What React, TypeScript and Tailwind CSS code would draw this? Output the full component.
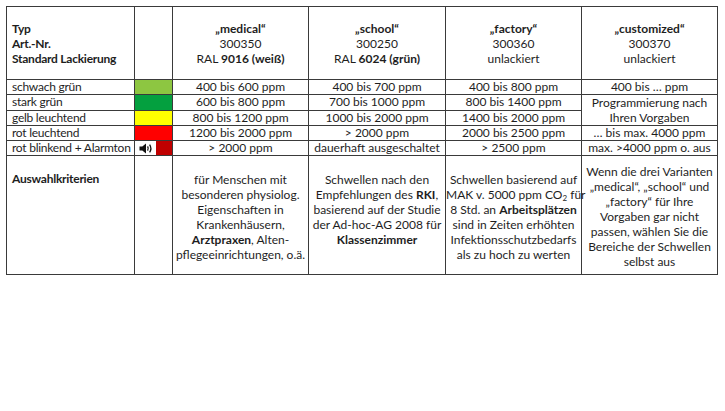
import React from "react";

const cell = "border border-[#3a3a3a] p-0 leading-[14px]";
const label = "tracking-[-0.25px]";

function Speaker() {
    return (
        <svg width="14" height="11" viewBox="0 0 14 11" className="block">
            <path d="M0.5 3.5h2.8L7 0.4v10.2L3.3 7.5H0.5z" fill="#111" />
            <path d="M8.6 3.4q1.3 2.1 0 4.2" stroke="#111" strokeWidth="1.3" fill="none" />
            <path d="M10.6 1.6q2.6 3.9 0 7.8" stroke="#111" strokeWidth="1.3" fill="none" />
        </svg>
    );
}

const rows = [
    { label: "schwach grün", color: "bg-[#8dc641]", values: ["400 bis 600 ppm", "400 bis 700 ppm", "400 bis 800 ppm"] },
    { label: "stark grün", color: "bg-[#04a03f]", values: ["600 bis 800 ppm", "700 bis 1000 ppm", "800 bis 1400 ppm"] },
    { label: "gelb leuchtend", color: "bg-[#ffff00]", values: ["800 bis 1200 ppm", "1000 bis 2000 ppm", "1400 bis 2000 ppm"] },
    { label: "rot leuchtend", color: "bg-[#ff0000]", values: ["1200 bis 2000 ppm", "> 2000 ppm", "2000 bis 2500 ppm"] },
];

export default function App() {
    return (
        <div className="w-[725px] h-[411px] bg-white pt-[6px] pl-[6px] font-['Lato','Open_Sans',sans-serif] text-[12px] text-[#1e1e1e]">
            <table className="border-collapse table-fixed w-[711px]">
                <colgroup>
                    <col className="w-[128px]" />
                    <col className="w-[38px]" />
                    <col className="w-[136px]" />
                    <col className="w-[137px]" />
                    <col className="w-[136px]" />
                    <col className="w-[136px]" />
                </colgroup>
                <tbody>
                    {/* Header */}
                    <tr className="h-[73px]">
                        <td className={`${cell} ${label} pl-[5px] font-bold align-middle`}>
                            <div className="leading-[15px]">Typ<br />Art.-Nr.<br />Standard Lackierung</div>
                        </td>
                        <td className={cell}></td>
                        <td className={`${cell} text-center`}>
                            <div className="leading-[15px]">
                                <b>„medical“</b><br />300350<br />RAL <b>9016 (weiß)</b>
                            </div>
                        </td>
                        <td className={`${cell} text-center`}>
                            <div className="leading-[15px]">
                                <b>„school“</b><br />300250<br />RAL <b>6024 (grün)</b>
                            </div>
                        </td>
                        <td className={`${cell} text-center`}>
                            <div className="leading-[15px]">
                                <b>„factory“</b><br />300360<br />unlackiert
                            </div>
                        </td>
                        <td className={`${cell} text-center`}>
                            <div className="leading-[15px]">
                                <b>„customized“</b><br />300370<br />unlackiert
                            </div>
                        </td>
                    </tr>

                    {/* Colour rows */}
                    {rows.map((r, i) => (
                        <tr key={r.label} className="h-[15px]">
                            <td className={`${cell} ${label} pl-[5px] whitespace-nowrap`}>{r.label}</td>
                            <td className={`${cell} ${r.color}`}></td>
                            {r.values.map((v) => (
                                <td key={v} className={`${cell} text-center whitespace-nowrap`}>{v}</td>
                            ))}
                            {i === 0 && <td className={`${cell} text-center whitespace-nowrap`}>400 bis … ppm</td>}
                            {i === 1 && (
                                <td rowSpan={2} className={`${cell} text-center leading-[15px]`}>
                                    Programmierung nach<br />Ihren Vorgaben
                                </td>
                            )}
                            {i === 3 && <td className={`${cell} text-center whitespace-nowrap`}>… bis max. 4000 ppm</td>}
                        </tr>
                    ))}
                    <tr className="h-[15px]">
                        <td className={`${cell} ${label} pl-[5px] whitespace-nowrap`}>rot blinkend + Alarmton</td>
                        <td className={cell}>
                            <div className="flex h-[14px]">
                                <div className="w-[21px] flex items-center justify-center bg-white">
                                    <Speaker />
                                </div>
                                <div className="flex-1 bg-[#c00000]"></div>
                            </div>
                        </td>
                        <td className={`${cell} text-center whitespace-nowrap`}>&gt; 2000 ppm</td>
                        <td className={`${cell} text-center whitespace-nowrap`}>dauerhaft ausgeschaltet</td>
                        <td className={`${cell} text-center whitespace-nowrap`}>&gt; 2500 ppm</td>
                        <td className={`${cell} text-center whitespace-nowrap`}>max. &gt;4000 ppm o. aus</td>
                    </tr>

                    {/* Criteria */}
                    <tr className="h-[119px]">
                        <td className={`${cell} ${label} align-top pl-[5px] pt-[16px] font-bold`}>Auswahlkriterien</td>
                        <td className={cell}></td>
                        <td className={`${cell} align-top pt-[16px] text-center leading-[15px] whitespace-nowrap`}>
                            für Menschen mit<br />
                            besonderen physiolog.<br />
                            Eigenschaften in<br />
                            Krankenhäusern,<br />
                            <b>Arztpraxen</b>, Alten-<br />
                            pflegeeinrichtungen, o.ä.
                        </td>
                        <td className={`${cell} align-top pt-[16px] text-center leading-[15px] whitespace-nowrap`}>
                            Schwellen nach den<br />
                            Empfehlungen des <b>RKI</b>,<br />
                            basierend auf der Studie<br />
                            der Ad-hoc-AG 2008 für<br />
                            <b>Klassenzimmer</b>
                        </td>
                        <td className={`${cell} align-top pt-[16px] text-center leading-[15px] whitespace-nowrap`}>
                            Schwellen basierend auf<br />
                            MAK v. 5000 ppm CO<sub className="text-[8px] leading-none">2</sub> für<br />
                            8 Std. an <b>Arbeitsplätzen</b><br />
                            sind in Zeiten erhöhten<br />
                            Infektionsschutzbedarfs<br />
                            als zu hoch zu werten
                        </td>
                        <td className={`${cell} align-top pt-[8px] text-center leading-[15px] whitespace-nowrap`}>
                            Wenn die drei Varianten<br />
                            „medical“, „school“ und<br />
                            „factory“ für Ihre<br />
                            Vorgaben gar nicht<br />
                            passen, wählen Sie die<br />
                            Bereiche der Schwellen<br />
                            selbst aus
                        </td>
                    </tr>
                </tbody>
            </table>
        </div>
    );
}
